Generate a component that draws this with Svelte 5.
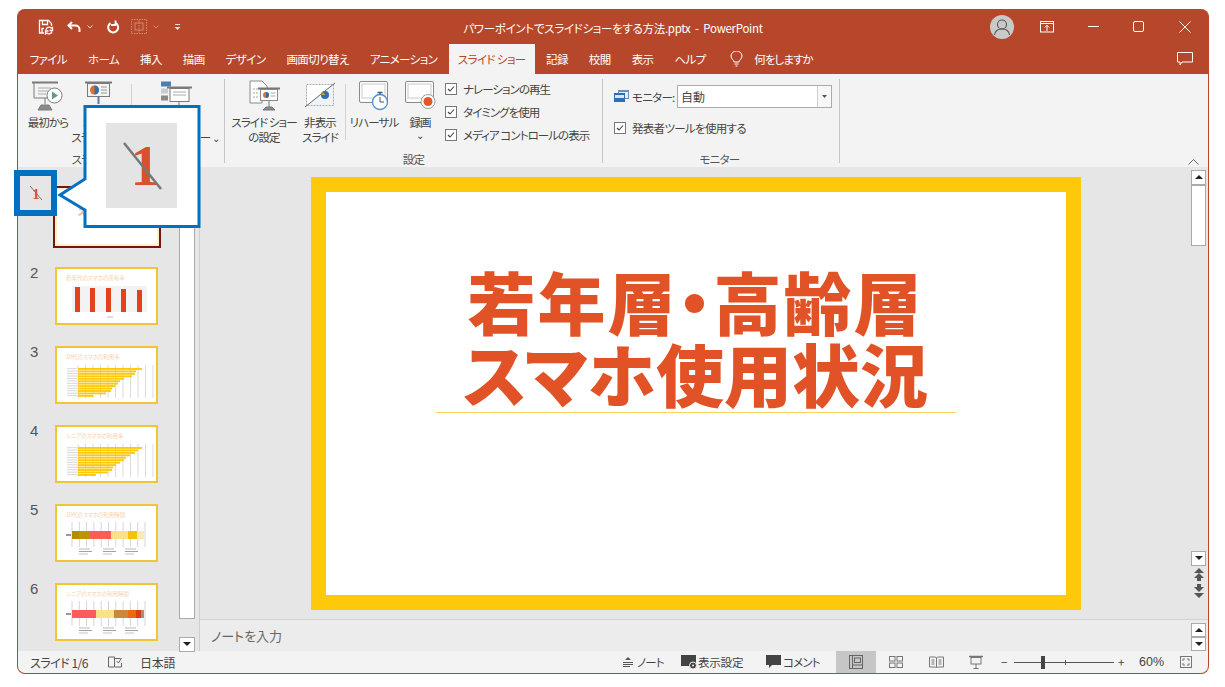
<script>
  const tabs = ['ファイル', 'ホーム', '挿入', '描画', 'デザイン', '画面切り替え', 'アニメーション', 'スライド ショー', '記録', '校閲', '表示', 'ヘルプ'];
  const checks = ['ナレーションの再生', 'タイミングを使用', 'メディア コントロールの表示'];
  const grid = [0, 1, 2, 3, 4, 5, 6, 7, 8, 9, 10];
  const bars3 = [64, 58, 57, 54, 46, 42, 40, 37, 34, 33, 28, 15];
  const bars4 = [64, 60, 57, 52, 48, 46, 42, 38, 35, 34, 30, 18];
  const seg5 = [[15, 7, '#b38f00'], [22, 11, '#bd9500'], [33, 21, '#ff5b5b'], [54, 17, '#ffe08a'], [71, 9, '#f4c20d'], [80, 7, '#ffe9b0']];
  const seg6 = [[15, 24, '#ff5b5b'], [39, 18, '#ffe08a'], [57, 14, '#c8893a'], [71, 8, '#ee6a10'], [79, 5, '#d93d15'], [84, 3, '#a89070']];
  const slides = [
    { n: 2, title: '若年代のスマホの所有率', kind: 'col' },
    { n: 3, title: '10代のスマホの利用率', kind: 'bar', bars: bars3 },
    { n: 4, title: 'シニアのスマホの利用率', kind: 'bar', bars: bars4 },
    { n: 5, title: '10代のスマホの利用時間', kind: 'stack', seg: seg5 },
    { n: 6, title: 'シニアのスマホの利用時間', kind: 'stack', seg: seg6 }
  ];
</script>

{#snippet chart(s)}
  <svg class="mini" viewBox="0 0 99 54">
    <text x="9" y="11" class="mini-title">{s.title}</text>
    {#if s.kind === 'col'}
      {#each Array(13) as _, i}
        <line x1="15" x2="90" y1={18 + i * 2} y2={18 + i * 2} stroke="#ccc" stroke-width=".5" />
      {/each}
      {#each [[18, 18], [33, 19], [49, 19], [64, 20], [80, 21]] as b}
        <rect x={b[0]} y={b[1]} width="5" height={43 - b[1]} fill="#e2431e" />
      {/each}
      <line x1="50" x2="56" y1="48" y2="48" stroke="#bbb" stroke-width="1" />
    {:else if s.kind === 'bar'}
      {#each grid as i}
        <line x1={21 + i * 7.5} x2={21 + i * 7.5} y1="17" y2="50" stroke="#c4c4c4" stroke-width=".6" />
      {/each}
      {#each s.bars as b, i}
        <rect x="21" y={20 + i * 2.45} width={b} height="1.9" fill="#ffc90b" />
        <line x1="10" x2="20" y1={20.7 + i * 2.45} y2={20.7 + i * 2.45} stroke="#bbb" stroke-width=".6" />
      {/each}
    {:else}
      {#each grid as i}
        <line x1={15 + i * 7.3} x2={15 + i * 7.3} y1="16" y2="41" stroke="#bbb" stroke-width=".6" />
      {/each}
      <rect x="9" y="28" width="5" height="2" fill="#999" />
      {#each s.seg as g}
        <rect x={g[0]} y="25" width={g[1]} height="8" fill={g[2]} />
      {/each}
      {#each [22, 46, 68] as x}
        <line x1={x} x2={x + 11} y1="43" y2="43" stroke="#999" stroke-width=".7" />
        <line x1={x} x2={x + 13} y1="45.5" y2="45.5" stroke="#777" stroke-width=".7" />
        <line x1={x} x2={x + 9} y1="48" y2="48" stroke="#aaa" stroke-width=".7" />
      {/each}
    {/if}
  </svg>
{/snippet}

{#snippet check(text)}
  <label class="check">
    <svg width="12" height="12" viewBox="0 0 12 12"><rect x=".5" y=".5" width="11" height="11" fill="#fff" stroke="#777" /><path d="M3 6l2 2 4-4.5" fill="none" stroke="#444" stroke-width="1.1" /></svg>
    <span>{text}</span>
  </label>
{/snippet}

<div class="win">
  <header class="titlebar">
    <div class="qat">
      <svg class="q1" width="16" height="16" viewBox="0 0 16 16" fill="none" stroke="#fff" stroke-width="1.3"><path d="M6 14H1.500V1.500h9l3 3V7" /><path d="M4.500 2v3.500h5V2M4 14V9.500h2" /><path d="M8 11a3 3 0 0 1 5-2l1.500-.5v3h-3" /><path d="M14 12.500a3 3 0 0 1-5 1.500L7.500 15v-3h3" /></svg>
      <svg class="q2" width="14" height="12" viewBox="0 0 14 12" fill="none" stroke="#fff" stroke-width="2"><path d="M5 1L1.500 4.500 5 8" /><path d="M2 4.500h6.500a4 4 0 0 1 4 4V11" /></svg>
      <svg class="caret" width="6" height="4" viewBox="0 0 6 4" fill="none" stroke="#f3d9d0"><path d="M.5.5L3 3 5.500.5" /></svg>
      <svg class="q3" width="14" height="14" viewBox="0 0 14 14" fill="none" stroke="#fff" stroke-width="2"><path d="M9.500 3a5 5 0 1 1-5 .2" /><path d="M9.500.5v4.500H5" stroke-width="1.800" /></svg>
      <svg class="q4" width="16" height="16" viewBox="0 0 16 16" fill="none" stroke="#cf8871" stroke-dasharray="1.500 1"><rect x=".5" y=".5" width="15" height="14" /><rect x="4" y="4" width="8" height="7" stroke-dasharray="none" /><path d="M8 1v13" /></svg>
      <svg class="caret c2" width="6" height="4" viewBox="0 0 6 4" fill="none" stroke="#cf8871"><path d="M.5.5L3 3 5.500.5" /></svg>
      <svg class="q5" width="7" height="6" viewBox="0 0 7 6" fill="#f3d9d0"><rect x="1" y="0" width="5" height="1" /><path d="M.5 3h6L3.500 6z" /></svg>
    </div>
    <div class="doc">パワーポイントでスライドショーをする方法.pptx &nbsp;-&nbsp; PowerPoint</div>
    <div class="winbtns">
      <div class="avatar">
        <svg width="24" height="24" viewBox="0 0 24 24" fill="none" stroke="#555" stroke-width="1.100"><circle cx="12" cy="9.500" r="4.500" /><path d="M4.500 20c.5-4 3-6 7.500-6s7 2 7.500 6" /></svg>
      </div>
      <svg class="w1" width="14" height="12" viewBox="0 0 14 12" fill="none" stroke="#fff"><rect x=".5" y=".5" width="13" height="10.500" /><path d="M.5 2.500h13" /><path d="M7 10V4.500M4.800 6.500L7 4.300l2.200 2.200" /></svg>
      <svg class="w2" width="11" height="2" viewBox="0 0 11 2"><rect width="11" height="1" fill="#fff" /></svg>
      <svg class="w3" width="11" height="11" viewBox="0 0 11 11" fill="none" stroke="#fff"><rect x=".5" y=".5" width="10" height="10" rx="1.500" /></svg>
      <svg class="w4" width="12" height="12" viewBox="0 0 12 12" fill="none" stroke="#fff"><path d="M.5.5l11 11M11.500.5l-11 11" /></svg>
    </div>
  </header>

  <nav class="tabs">
    {#each tabs as t}
      <span class="tab" class:active={t === 'スライド ショー'}>{t}</span>
    {/each}
    <svg class="bulb" width="13" height="16" viewBox="0 0 13 16" fill="none" stroke="#fff"><path d="M4 11c0-2-3-3-3-6a5.500 5 0 0 1 11 0c0 3-3 4-3 6z" /><path d="M4.500 13h4M5.500 15h2" /></svg>
    <span class="tell">何をしますか</span>
    <svg class="cmt" width="16" height="14" viewBox="0 0 16 14" fill="none" stroke="#fff"><path d="M.5.500h15v9.500H5l-2 3v-3H.5z" /></svg>
  </nav>

  <section class="ribbon">
    <div class="group g1">
      <div class="cmds">
        <div class="big w50">
          <svg width="34" height="32" viewBox="0 0 34 32" fill="none" stroke="#7a7a7a">
            <path d="M1 2.500h26" stroke-width="2" /><path d="M3 3v15h20" /><path d="M7 8h13M7 11h10M7 14h8" stroke="#aaa" />
            <path d="M14 18v6M7 30l3-5h8l3 5z" fill="#8a8a8a" />
            <circle cx="23.500" cy="15.500" r="7.500" fill="#fff" /><path d="M21 11.500l6 4-6 4z" fill="#5f9c85" stroke="none" />
          </svg>
          <span>最初から</span>
        </div>
        <div class="big w52">
          <svg width="34" height="32" viewBox="0 0 34 32" fill="none" stroke="#7a7a7a">
            <path d="M3 2.500h27" stroke-width="2" /><rect x="5.500" y="3.500" width="22" height="13" />
            <circle cx="12.500" cy="10" r="4.500" fill="#e0702c" stroke="none" /><path d="M12.500 10V5.500a4.500 4.500 0 0 1 0 9z" fill="#2f6eb0" stroke="none" />
            <path d="M19 7h6M19 10h6M19 13h6" stroke="#999" /><path d="M16.500 17v7" stroke="#4a7fb5" stroke-width="2" />
          </svg>
          <span>現在の</span><span>スライドから</span>
        </div>
        <i class="minisep h"></i>
        <div class="big w88">
          <svg width="34" height="32" viewBox="0 0 34 32" fill="none" stroke="#7a7a7a">
            <rect x="2" y="1.500" width="10" height="5" fill="#4a7fb5" stroke="none" /><rect x="2" y="8.500" width="7" height="5" fill="#ccc" stroke="none" /><rect x="2" y="15.500" width="7" height="5" fill="#8a8a8a" stroke="none" />
            <path d="M8 7.500h25" stroke-width="2" /><rect x="11" y="8.500" width="19" height="13" fill="#fff" /><path d="M14 12h13M14 15h13" stroke="#aaa" /><path d="M20 22v4" />
          </svg>
          <span>目的別</span><span class="cust">スライド ショー <em class="chev">⌄</em></span>
        </div>
      </div>
      <div class="glabel">スライド ショーの開始</div>
    </div>

    <div class="group g2">
      <div class="cmds">
        <div class="big w66">
          <svg width="34" height="32" viewBox="0 0 34 32" fill="none" stroke="#8a8a8a">
            <path d="M3 1h12l5 5v6H15v11H3z" fill="#fbfbfb" /><path d="M6 9h5M6 13h5M6 17h5" stroke="#aaa" stroke-dasharray="2 1" />
            <path d="M11 8.500h22" stroke-width="2" stroke="#777" /><rect x="13.500" y="9.500" width="17" height="11" fill="#fff" />
            <circle cx="19" cy="15" r="3" fill="#e0702c" stroke="none" /><path d="M19 15v-3a3 3 0 0 1 0 6z" fill="#2f6eb0" stroke="none" /><path d="M23.500 13h5M23.500 16h5" stroke="#aaa" />
            <path d="M22 21v6M16 30l3-3h6l3 3z" fill="#888" stroke="#777" />
          </svg>
          <span>スライド ショー</span><span>の設定</span>
        </div>
        <div class="big w46">
          <svg width="34" height="32" viewBox="0 0 34 32" fill="none">
            <rect x="3.500" y="4.500" width="27" height="21" fill="#fff" stroke="#aaa" stroke-dasharray="2 1" />
            <path d="M4 25L30 5v20z" fill="#eef3f7" /><circle cx="22" cy="15" r="4" fill="#2f6eb0" /><path d="M22 15l-4 0a4 4 0 0 1 2-3.500z" fill="#e0a33c" />
            <path d="M2 27L32 3" stroke="#666" />
          </svg>
          <span>非表示</span><span>スライド</span>
        </div>
        <i class="minisep"></i>
        <div class="big w50">
          <svg width="34" height="32" viewBox="0 0 34 32" fill="none" stroke="#8a8a8a">
            <rect x="2.500" y="1.500" width="28" height="21" rx="1.500" fill="#fdfdfd" /><rect x="5" y="4" width="23" height="14" stroke="#ccc" />
            <circle cx="23" cy="22" r="7.500" fill="#fff" stroke="#4a8fd0" stroke-width="1.300" /><path d="M23 17v5h4" stroke="#555" /><path d="M20.500 12.500h5M23 12.500v2" stroke="#555" stroke-width="1.300" />
          </svg>
          <span>リハーサル</span>
        </div>
        <div class="big w42">
          <svg width="34" height="32" viewBox="0 0 34 32" fill="none" stroke="#8a8a8a">
            <rect x="2.500" y="1.500" width="28" height="21" rx="1.500" fill="#fdfdfd" /><rect x="5" y="4" width="23" height="14" stroke="#ccc" />
            <circle cx="25" cy="21.500" r="7" fill="#fff" stroke="#999" /><circle cx="25" cy="21.500" r="4.500" fill="#e0552c" stroke="none" />
          </svg>
          <span>録画</span><em class="chev">⌄</em>
        </div>
        <div class="checks">
          {#each checks as c}
            {@render check(c)}
          {/each}
        </div>
      </div>
      <div class="glabel">設定</div>
    </div>

    <div class="group g3">
      <div class="cmds col">
        <div class="mon">
          <svg width="15" height="13" viewBox="0 0 15 13"><rect x="4" y="0" width="11" height="9" fill="#6f8fb0" /><rect x="5" y="2" width="9" height="6" fill="#e4edf5" /><rect x="0" y="3" width="11" height="9" fill="#2f6eb0" /><rect x="1" y="5" width="9" height="3" fill="#d8e4f0" /></svg>
          <span class="montext">モニター:</span>
          <div class="sel"><span>自動</span><b><svg width="5" height="3" viewBox="0 0 5 3"><path d="M0 0h5L2.500 3z" fill="#555" /></svg></b></div>
        </div>
        {@render check('発表者ツールを使用する')}
      </div>
      <div class="glabel">モニター</div>
    </div>

    <svg class="collapse" width="11" height="6" viewBox="0 0 11 6" fill="none" stroke="#666"><path d="M.5 5.500l5-5 5 5" /></svg>
  </section>

  <main class="main">
    <aside class="pane">
      <div class="list">
        <div class="row">
          <span class="num"></span>
          <div class="thumb first">
            <div class="first-title">若年層・高齢層<br />スマホ使用状況</div>
          </div>
        </div>
        {#each slides as s}
          <div class="row">
            <span class="num">{s.n}</span>
            <div class="thumb">{@render chart(s)}</div>
          </div>
        {/each}
      </div>
      <div class="vscroll left">
        <div class="bigthumb"></div>
        <div class="sbtn dn"></div>
      </div>
    </aside>

    <div class="work">
      <div class="editrow">
        <div class="canvas">
          <div class="slide">
            <div class="slide-in">
              <h1><span class="l1">若年層・高齢層</span><br />スマホ使用状況</h1>
              <div class="rule"></div>
            </div>
          </div>
        </div>
        <div class="vscroll right">
          <div class="sbtn up"></div>
          <div class="rthumb"></div>
          <div class="spacer"></div>
          <div class="sbtn dn"></div>
          <svg class="pg" width="10" height="14" viewBox="0 0 10 14" fill="#555"><path d="M5 0l5 5H0zM5 5l5 5H7v3H3v-3H0z" /></svg>
          <svg class="pg" width="10" height="14" viewBox="0 0 10 14" fill="#555"><path d="M3 0h4v3h3L5 8 0 3h3zM0 9h10l-5 5z" /></svg>
        </div>
      </div>
      <div class="notes">
        <span>ノートを入力</span>
        <div class="notescroll"><div class="sbtn up"></div><div class="sbtn dn"></div></div>
      </div>
    </div>
  </main>

  <footer class="status">
    <span class="s-slide">スライド 1/6</span>
    <svg class="s-book" width="14" height="12" viewBox="0 0 14 12" fill="none" stroke="#666"><path d="M.5 1h6v10h-6zM7 2.500h5.500M7 11h6.500V7" /><path d="M8.500 5l2 2 3-5" /></svg>
    <span>日本語</span>
    <div class="st-right">
      <svg class="s-note" width="12" height="11" viewBox="0 0 12 11" fill="none" stroke="#555"><path d="M6 0L9 3H3z" fill="#555" stroke="none" /><path d="M1 5.500h10M1 7.500h10M1 9.500h7" /></svg>
      <span class="s-t1">ノート</span>
      <svg class="s-view" width="17" height="15" viewBox="0 0 17 15"><rect width="15" height="11" fill="#444" /><circle cx="12" cy="10.500" r="3.500" fill="#444" stroke="#f3f3f3" /><circle cx="12" cy="10.500" r="1" fill="#f3f3f3" /></svg>
      <span class="s-t2">表示設定</span>
      <svg class="s-cm" width="16" height="14" viewBox="0 0 16 14"><path d="M0 0h15v10H6l-3 3v-3H0z" fill="#444" /></svg>
      <span class="s-t3">コメント</span>
      <div class="views">
        <div class="vb on"><svg width="14" height="14" viewBox="0 0 14 14" fill="none" stroke="#666"><rect x=".5" y=".5" width="13" height="13" /><path d="M3.500 1v12M3.500 10h10" /><rect x="5.500" y="3" width="6" height="4.500" /></svg></div>
        <div class="vb"><svg width="14" height="12" viewBox="0 0 14 12" fill="none" stroke="#777"><rect x=".5" y=".5" width="5.500" height="4.500" /><rect x="8" y=".5" width="5.500" height="4.500" /><rect x=".5" y="7" width="5.500" height="4.500" /><rect x="8" y="7" width="5.500" height="4.500" /></svg></div>
        <div class="vb"><svg width="15" height="12" viewBox="0 0 15 12" fill="none" stroke="#777"><path d="M.5 1h6l1 1 1-1h6v10h-6l-1 1-1-1h-6zM7.500 2v9M2.500 4h3M2.500 6h3M2.500 8h3M9.500 4h3M9.500 6h3M9.500 8h3" /></svg></div>
        <div class="vb"><svg width="14" height="14" viewBox="0 0 14 14" fill="none" stroke="#777"><path d="M0 1.500h14" stroke-width="1.500" /><rect x="2" y="2.500" width="10" height="6.500" /><path d="M7 9v4M4.500 13.500h5" /></svg></div>
      </div>
      <span class="z-minus">−</span>
      <div class="slider"><i class="tick"></i><i class="knob"></i></div>
      <span class="z-plus">+</span>
      <span class="z-pct">60%</span>
      <svg class="s-fit" width="12" height="12" viewBox="0 0 12 12" fill="none" stroke="#777"><rect x=".5" y=".5" width="11" height="11" /><path d="M3 5V3h2M9 5V3H7M3 7v2h2M9 7v2H7" /></svg>
    </div>
  </footer>
</div>

<!-- callout lying over the ribbon and the slide list -->
<div class="markbox">
  <svg width="14" height="16" viewBox="0 0 14 16"><text x="7" y="14" text-anchor="middle" class="mark-1">1</text><line x1="1" y1="1" x2="13" y2="15" stroke="#777" /></svg>
</div>
<svg class="callout" width="144" height="124" viewBox="0 0 144 124">
  <path d="M28 2.500h114v120H28V106L3 91l25-16z" fill="#fff" stroke="#0070c0" stroke-width="3" />
</svg>
<div class="zoomed">
  <svg width="71" height="85" viewBox="0 0 71 85"><text x="39" y="62" text-anchor="middle" class="big-1">1</text><line x1="18" y1="20" x2="55" y2="66" stroke="#777" stroke-width="2.500" /></svg>
</div>

<style>
  :global(body) {
    margin: 0;
    background: #fff;
    overflow: hidden;
  }

  .win {
    position: relative;
    box-sizing: border-box;
    width: 1192px;
    height: 665px;
    margin: 9px 0 0 17px;
    display: flex;
    flex-direction: column;
    background: #b7472a;
    border: 1px solid #b7472a;
    border-top: 0;
    border-radius: 8px;
    overflow: hidden;
    font-family: "Noto Sans CJK JP", "Liberation Sans", sans-serif;
    font-feature-settings: "palt";
    font-size: 11.500px;
    letter-spacing: -0.7px;
    color: #444;
  }

  .titlebar {
    height: 35px;
    flex: none;
    display: grid;
    grid-template-columns: 1fr auto 1fr;
    align-items: center;
    color: #fff;
  }
  .qat {
    display: flex;
    align-items: center;
    padding-left: 20px;
    padding-top: 1px;
  }
  .q2 { margin-left: 13px; }
  .caret { margin-left: 6px; }
  .q3 { margin-left: 13px; }
  .q4 { margin-left: 11px; }
  .c2 { margin-left: 6px; }
  .q5 { margin-left: 15px; }
  .doc {
    padding-top: 2px;
    letter-spacing: -0.3px;
    white-space: nowrap;
  }
  .winbtns {
    display: flex;
    align-items: center;
    justify-content: flex-end;
    padding-right: 17px;
  }
  .avatar {
    width: 24px;
    height: 24px;
    border-radius: 50%;
    background: #c9c9c9;
  }
  .avatar svg { display: block; }
  .w1 { margin-left: 26px; }
  .w2 { margin-left: 34px; }
  .w3 { margin-left: 34px; }
  .w4 { margin-left: 35px; }

  .tabs {
    height: 30px;
    flex: none;
    display: flex;
    align-items: stretch;
    padding-left: 1px;
    color: #fff;
    letter-spacing: -0.6px;
  }
  .tab {
    display: flex;
    align-items: center;
    padding: 0 10.500px;
    white-space: nowrap;
  }
  .tab.active {
    background: #f3f3f3;
    color: #b7472a;
    padding: 0 9px;
    margin: 0 1px;
  }
  .bulb {
    align-self: center;
    margin-left: 14px;
  }
  .tell {
    align-self: center;
    margin-left: 11px;
    letter-spacing: -0.9px;
  }
  .cmt {
    align-self: center;
    margin-left: auto;
    margin-right: 15px;
  }

  .ribbon {
    height: 93px;
    flex: none;
    box-sizing: border-box;
    padding: 5px 0 4px;
    display: flex;
    background: #f3f3f3;
  }
  .group {
    display: flex;
    flex-direction: column;
    box-sizing: border-box;
    border-right: 1px solid #c6c6c6;
  }
  .g1 { width: 207px; padding-left: 5px; }
  .g2 { width: 378px; padding-left: 6px; }
  .g3 { width: 237px; padding-left: 11px; }
  .cmds {
    flex: 1;
    display: flex;
    min-height: 0;
  }
  .cmds.col { flex-direction: column; }
  .glabel {
    height: 14px;
    line-height: 14px;
    margin-bottom: -3px;
    text-align: center;
    color: #555;
  }
  .g1 .glabel { margin-left: -5px; }
  .g2 .glabel { margin-left: -6px; }
  .g3 .glabel { margin-left: -14px; }
  .big {
    display: flex;
    flex-direction: column;
    align-items: center;
    line-height: 15px;
    letter-spacing: -0.9px;
    white-space: nowrap;
    flex: none;
    color: #444;
  }
  .big svg {
    display: block;
    margin: 0 0 2px;
    height: 34px;
  }
  .cust { padding-left: 12px; }
  .w42 { width: 42px; }
  .w46 { width: 46px; }
  .w50 { width: 50px; }
  .w52 { width: 52px; }
  .w66 { width: 66px; }
  .w88 { width: 88px; }
  .minisep {
    width: 1px;
    height: 56px;
    margin: 5px 3px 0 2px;
    background: #d2d2d2;
    flex: none;
  }
  .minisep.h { margin: 5px 0 0 6px; }
  .chev {
    font-style: normal;
    font-size: 10px;
    line-height: 10px;
  }
  .checks {
    margin-left: 4px;
    margin-top: -2px;
    letter-spacing: -0.95px;
  }
  .check {
    display: flex;
    align-items: center;
    height: 23px;
    gap: 6px;
    white-space: nowrap;
  }
  .check svg { flex: none; }
  .mon {
    display: flex;
    align-items: center;
    height: 23px;
    margin-top: 6px;
    margin-bottom: 8px;
  }
  .montext {
    margin-left: 3px;
    width: 45px;
    flex: none;
    white-space: nowrap;
  }
  .sel {
    box-sizing: border-box;
    width: 155px;
    height: 23px;
    display: flex;
    align-items: center;
    justify-content: space-between;
    background: #fff;
    border: 1px solid #ababab;
    padding-left: 3px;
    font-size: 12px;
    letter-spacing: 0;
  }
  .sel b {
    display: flex;
    align-items: center;
    justify-content: center;
    width: 13px;
    height: 100%;
    border-left: 1px solid #d0d0d0;
    background: #f7f7f7;
  }
  .collapse {
    margin-left: auto;
    margin-right: 9px;
    align-self: flex-end;
    margin-bottom: -2px;
  }

  .main {
    flex: 1;
    min-height: 0;
    display: flex;
    background: #e6e6e6;
  }
  .pane {
    width: 181px;
    flex: none;
    display: flex;
    border-right: 1px solid #cfcfcf;
    box-sizing: content-box;
  }
  .list {
    flex: 1;
    padding: 21px 0 0 0;
    overflow: hidden;
  }
  .row {
    display: flex;
    height: 58px;
    margin-bottom: 21px;
    padding-left: 12px;
  }
  .num {
    width: 25px;
    margin-top: -2px;
    font-size: 15px;
    line-height: 15px;
    letter-spacing: 0;
    color: #555;
    font-family: "Liberation Sans", sans-serif;
  }
  .thumb {
    box-sizing: border-box;
    width: 103px;
    height: 58px;
    background: #fff;
    border: 2px solid #f2c438;
    overflow: hidden;
  }
  .thumb.first {
    flex: none;
    height: 62px;
    width: 108px;
    margin: -2px -3px 0 -2px;
    border: 2px solid #7a1414;
    box-shadow: inset 0 0 0 2px #fff1c2;
  }
  .first-title {
    margin-top: 9px;
    text-align: center;
    font-size: 8.500px;
    line-height: 9.500px;
    font-weight: 900;
    color: #f2b9a5;
    letter-spacing: 0;
    white-space: nowrap;
  }
  .mini {
    display: block;
    width: 99px;
    height: 54px;
  }
  .mini-title {
    font-size: 5.500px;
    letter-spacing: 0;
    fill: #f9cfa6;
  }

  .vscroll {
    width: 16px;
    flex: none;
    display: flex;
    flex-direction: column;
  }
  .vscroll.left {
    margin-right: 4px;
    height: 485px;
  }
  .bigthumb {
    flex: 1;
    background: #fff;
    border: 1px solid #aaa;
    margin-bottom: 18px;
    margin-top: -10px;
  }
  .sbtn {
    position: relative;
    box-sizing: border-box;
    height: 15px;
    flex: none;
    background: #fff;
    border: 1px solid #aaa;
  }
  .sbtn::after {
    content: "";
    position: absolute;
    left: 3px;
    top: 4px;
    border-left: 4px solid transparent;
    border-right: 4px solid transparent;
  }
  .sbtn.dn::after { border-top: 4px solid #222; }
  .sbtn.up::after { border-bottom: 4px solid #222; }

  .work {
    flex: 1;
    min-width: 0;
    display: flex;
    flex-direction: column;
  }
  .editrow {
    flex: 1;
    min-height: 0;
    display: flex;
  }
  .canvas {
    flex: 1;
    display: flex;
    justify-content: center;
    padding-top: 10px;
    min-width: 0;
  }
  .slide {
    box-sizing: border-box;
    width: 770px;
    height: 433px;
    border: 15px solid #ffc90b;
    background: #fff;
  }
  .slide-in {
    display: flex;
    flex-direction: column;
    align-items: center;
    padding-top: 73px;
  }
  h1 {
    margin: 0;
    text-align: center;
    font-size: 68px;
    line-height: 72px;
    font-weight: 900;
    letter-spacing: 0;
    color: #e15326;
    white-space: nowrap;
  }
  .l1 { letter-spacing: 2px; }
  .rule {
    width: 520px;
    height: 0;
    margin-top: 3px;
    border-top: 1px solid #fbd35a;
  }
  .vscroll.right {
    width: 15px;
    margin-right: 2px;
    padding-top: 3px;
    align-items: center;
  }
  .vscroll.right > .sbtn { width: 15px; }
  .rthumb {
    box-sizing: border-box;
    width: 15px;
    height: 61px;
    flex: none;
    background: #fff;
    border: 1px solid #aaa;
  }
  .spacer { flex: 1; }
  .pg {
    margin-top: 2px;
    flex: none;
  }
  .vscroll.right .pg:last-child { margin-bottom: 21px; }

  .notes {
    height: 32px;
    flex: none;
    box-sizing: border-box;
    display: flex;
    align-items: center;
    justify-content: space-between;
    padding-left: 11px;
    padding-right: 2px;
    background: #ececec;
    border-top: 1px solid #cfd4d0;
    font-size: 13px;
    letter-spacing: 0;
    color: #666;
  }
  .notescroll {
    width: 15px;
    margin-top: 2px;
  }
  .notescroll .sbtn { height: 14px; }

  .status {
    height: 22px;
    flex: none;
    display: flex;
    align-items: center;
    padding-left: 12px;
    background: #f3f3f3;
    font-size: 12px;
    letter-spacing: -0.2px;
    color: #444;
    white-space: nowrap;
  }
  .s-slide { letter-spacing: -0.5px; }
  .s-book { margin: 0 18px 0 20px; }
  .st-right {
    margin-left: auto;
    height: 100%;
    display: flex;
    align-items: center;
    font-size: 11.500px;
    letter-spacing: -0.8px;
  }
  .s-t1 { margin-left: 3px; width: 28px; }
  .s-view { margin-left: 16px; }
  .s-t2 { width: 48px; letter-spacing: -0.2px; }
  .s-cm { margin-left: 20px; }
  .s-t3 { margin-left: 1px; width: 34px; }
  .views {
    display: flex;
    height: 100%;
    margin-left: 19px;
  }
  .vb {
    width: 40px;
    display: flex;
    align-items: center;
    justify-content: center;
  }
  .vb.on { background: #c6c6c6; }
  .z-minus { margin-left: 5px; width: 13px; }
  .slider {
    position: relative;
    width: 100px;
    height: 1px;
    background: #555;
  }
  .tick {
    position: absolute;
    left: 51px;
    top: -2px;
    width: 1px;
    height: 5px;
    background: #555;
  }
  .knob {
    position: absolute;
    left: 27px;
    top: -6px;
    width: 4px;
    height: 13px;
    background: #444;
  }
  .z-plus { margin-left: 4px; width: 9px; }
  .z-pct {
    margin-left: 12px;
    width: 27px;
    font-size: 12.500px;
    letter-spacing: 0;
    font-family: "Liberation Sans", sans-serif;
  }
  .s-fit { margin: 0 16px 0 14px; }

  .markbox {
    position: absolute;
    left: 14px;
    top: 170px;
    box-sizing: border-box;
    width: 43px;
    height: 46px;
    display: flex;
    align-items: center;
    justify-content: center;
    border: 6px solid #0070c0;
    background: #e6e6e6;
  }
  .mark-1 {
    font: bold 15px "Liberation Serif", serif;
    fill: #d9512c;
  }
  .callout {
    position: absolute;
    left: 57px;
    top: 104px;
    overflow: visible;
  }
  .zoomed {
    position: absolute;
    left: 106px;
    top: 123px;
    width: 71px;
    height: 85px;
    background: #e4e4e4;
  }
  .zoomed svg { display: block; }
  .big-1 {
    font: bold 58px "Liberation Serif", serif;
    fill: #d9512c;
  }
</style>
